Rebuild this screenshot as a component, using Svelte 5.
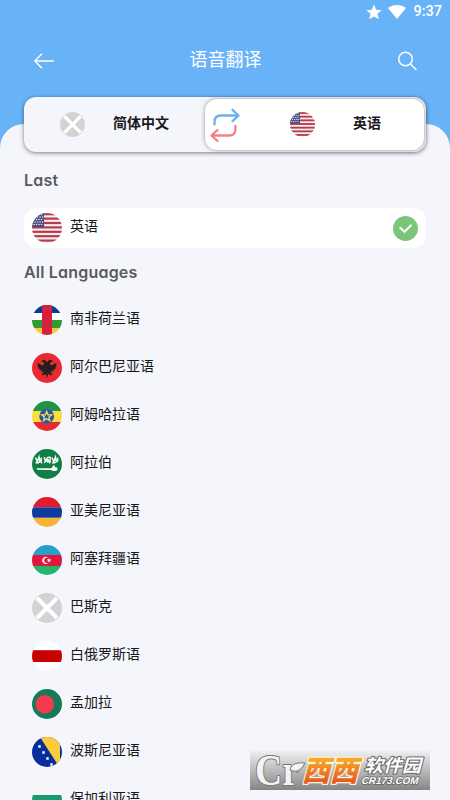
<script>
  const last = { name: '英语', flag: 'us' };

  const languages = [
    { name: '南非荷兰语', flag: 'cf' },
    { name: '阿尔巴尼亚语', flag: 'al' },
    { name: '阿姆哈拉语', flag: 'et' },
    { name: '阿拉伯', flag: 'sa' },
    { name: '亚美尼亚语', flag: 'am' },
    { name: '阿塞拜疆语', flag: 'az' },
    { name: '巴斯克', flag: 'none' },
    { name: '白俄罗斯语', flag: 'by' },
    { name: '孟加拉', flag: 'bd' },
    { name: '波斯尼亚语', flag: 'ba' },
    { name: '保加利亚语', flag: 'bg' }
  ];

  const stripes = [0, 1, 2, 3, 4, 5, 6];
  const starRows = [1.5, 4, 6.5, 9, 11.5];
  const starCols = [2, 4.5, 7, 9.5];
</script>

<!-- every flag is drawn on a 30x30 grid and clipped to a circle -->
{#snippet flag(code)}
  <svg class="flag" viewBox="0 0 30 30">
    {#if code === 'us'}
      <rect width="30" height="30" fill="#f4eef0" />
      {#each stripes as s}
        <rect y={s * 4.4 + 0.1} width="30" height="2.2" fill="#b83a4b" />
      {/each}
      <rect width="12" height="14" fill="#474a7f" />
      {#each starRows as y, r}
        {#each starCols as x}
          <circle cx={x + (r % 2 ? 1.1 : 0)} cy={y} r="0.8" fill="#e8e8f4" />
        {/each}
      {/each}
    {:else if code === 'cf'}
      <rect width="30" height="8" fill="#0d3b91" />
      <rect y="8" width="30" height="7" fill="#fff" />
      <rect y="15" width="30" height="8" fill="#319b31" />
      <rect y="23" width="30" height="7" fill="#fdc63c" />
      <rect x="10" width="10" height="30" fill="#d5213e" />
    {:else if code === 'al'}
      <rect width="30" height="30" fill="#ea2a33" />
      <path
        fill="#231f20"
        d="M15 9.2 12.8 6.8 10 7.3 9.3 8.8 11.4 9 12.2 11 10.8 12.5 5.2 9.8 6.2 12.4 4.8 12.6 6.8 14.4 5.6 15.2 8.2 16.1 7 17.3 10.2 17.3 9 19.2 12 18.4 10.2 21 8.8 21.4 11.8 22.2 13.7 20.7 15 25 16.3 20.7 18.2 22.2 21.2 21.4 19.8 21 18 18.4 21 19.2 19.8 17.3 23 17.3 21.8 16.1 24.4 15.2 23.2 14.4 25.2 12.6 23.8 12.4 24.8 9.8 19.2 12.5 17.8 11 18.6 9 20.7 8.8 20 7.3 17.2 6.8Z"
      />
    {:else if code === 'et'}
      <rect width="30" height="10" fill="#219343" />
      <rect y="10" width="30" height="11" fill="#fbdd3b" />
      <rect y="21" width="30" height="9" fill="#e62b30" />
      <circle cx="14.7" cy="15.3" r="7.4" fill="#2458b0" />
      <path class="outline" stroke="#f5dc4d" stroke-width="1.3" d="m14.7 10.3 1.3 3.5 3.7.1-2.9 2.3 1.1 3.6-3.2-2.1-3.2 2.1 1.1-3.6-2.9-2.3 3.7-.1Z" />
    {:else if code === 'sa'}
      <rect width="30" height="30" fill="#117e43" />
      <path class="outline" stroke="#fff" stroke-width="1.4" d="m3.5 8.5 1.8 4.3L7 8l1.1 5.5M3.500 13.800h2.800l3-2.200-.2-3M7.400 10.500l2.700 3.800M12 8.300l1.300 3.300 2.500-3.200 2.300-.1v5M12 13.800l4-3.300 2 3.800M13 10.300l3.300 3.300M20 8.500l1.800 4.300L23.500 8l1.100 5.500M20 13.800h2.800l3-2.200-.2-3" />
      <path fill="#fff" d="M4.500 19.200h15.200l1-2.200 1.800-.7.5 2 2.200.3.300 2.300-1.700 1.200h-3.400l-.9-1.200-14.200-.2Z" />
    {:else if code === 'am'}
      <rect width="30" height="10.3" fill="#df1b2d" />
      <rect y="10.3" width="30" height="10.5" fill="#0d3ba0" />
      <rect y="20.8" width="30" height="9.2" fill="#f8b334" />
    {:else if code === 'az'}
      <rect width="30" height="10" fill="#28a0cb" />
      <rect y="10" width="30" height="11" fill="#e0163f" />
      <rect y="21" width="30" height="9" fill="#24b76a" />
      <path fill="#fff" d="M16.2 12.9a3.5 3.5 0 1 0 0 5 2.8 2.8 0 1 1 0-5Z" />
      <path fill="#fff" d="m17 13.100.6 1.400 1.300-.2-.8 1.100.8 1.100-1.300-.2-.6 1.400-.6-1.400-1.300.2.8-1.100-.8-1.100 1.300.2Z" />
    {:else if code === 'by'}
      <rect width="30" height="30" fill="#fff" />
      <rect y="9.2" width="30" height="11.8" fill="#c80000" />
    {:else if code === 'bd'}
      <rect width="30" height="30" fill="#147a59" />
      <circle cx="12.8" cy="15.2" r="9.2" fill="#f53a4d" />
    {:else if code === 'ba'}
      <rect width="30" height="30" fill="#092e9c" />
      <path fill="#fdcc3b" d="M8 0h20v28h-2Z" />
      <path fill="#fff" d="M6.300 8.300h2.400v2.400H6.300zM10.300 14.300h2.400v2.400h-2.400zM14.300 20.300h2.400v2.400h-2.400zM18.300 26.300h2.400v2.400h-2.400z" />
    {:else if code === 'bg'}
      <rect width="30" height="10" fill="#f7f7f7" />
      <rect y="10" width="30" height="10" fill="#149d70" />
      <rect y="20" width="30" height="10" fill="#d62612" />
    {:else}
      <rect width="30" height="30" fill="#d3d3d3" />
      <path class="outline" stroke="#fff" stroke-width="4" d="m5 5 20 20M25 5 5 25" />
    {/if}
  </svg>
{/snippet}

<main>
  <header>
    <div class="status">
      <svg width="16" height="16" viewBox="0 0 14 14">
        <path fill="#fff" d="m7 .5 1.900 4.500 4.800.4-3.700 3.200 1.200 4.800L7 10.900l-4.200 2.500L4 8.600.3 5.400l4.800-.4Z" />
      </svg>
      <svg width="18" height="14" viewBox="0 0 18 14">
        <path fill="#fff" d="M9 14 0 3C5.400-1 12.600-1 18 3Z" />
      </svg>
      <span class="clock">9:37</span>
    </div>
    <nav>
      <svg class="line" width="20" height="16" viewBox="0 0 20 16">
        <path d="M19.300 8H.8M7.500 1.200.8 8l6.700 6.800" />
      </svg>
      <h1>语音翻译</h1>
      <svg class="line" width="20" height="20" viewBox="0 0 20 20">
        <circle cx="8.500" cy="8" r="6.800" />
        <path d="m13.500 13 5.500 5.500" />
      </svg>
    </nav>
  </header>

  <section class="sheet">
    <div class="switcher">
      <button class="from">
        {@render flag('none')}
        <span>简体中文</span>
      </button>
      <button class="to">
        <svg class="swap" width="30" height="32" viewBox="0 0 30 32">
          <path stroke="#69b3ee" d="M4.500 15.500V13q0-6.500 6.500-6.500h17.500M22.500.8l6 5.700-6 5.700" />
          <path stroke="#f68080" d="M25.500 17v2.500q0 7-6.500 7H2M7.500 21l-6 5.500 6 5.500" />
        </svg>
        {@render flag('us')}
        <span>英语</span>
      </button>
    </div>

    <h2 class="last-title">Last</h2>
    <div class="row selected">
      {@render flag(last.flag)}
      <span>{last.name}</span>
      <svg class="check" width="25" height="25" viewBox="0 0 25 25">
        <circle cx="12.500" cy="12.500" r="12.500" fill="#7ac57a" />
        <path d="m6.700 11.300 4.800 4.600 7-7.200" />
      </svg>
    </div>

    <h2 class="all-title">All Languages</h2>
    <ul>
      {#each languages as lang (lang.name)}
        <li class="row">
          {@render flag(lang.flag)}
          <span>{lang.name}</span>
        </li>
      {/each}
    </ul>
  </section>

  <aside class="badge">
    <svg width="180" height="40" viewBox="0 0 180 40">
      <defs>
        <linearGradient id="plate" x2="0" y2="1">
          <stop offset="0" stop-color="#f1f2f4" />
          <stop offset="1" stop-color="#858585" />
        </linearGradient>
        <linearGradient id="fire" x2="0" y2="1">
          <stop offset="0.2" stop-color="#f7b52c" />
          <stop offset="0.9" stop-color="#e4501f" />
        </linearGradient>
      </defs>
      <rect width="180" height="40" fill="url(#plate)" />
      <text class="brand-cr" x="5" y="34.500" textLength="44" lengthAdjust="spacingAndGlyphs">Cr</text>
      <path class="leaf" d="M40 20c1-5 5-8 15-7-3 6-7 9-12 8Z" />
      <g transform="skewX(-15)">
        <text class="brand-xi" x="60" y="31" textLength="56" lengthAdjust="spacingAndGlyphs">西西</text>
        <text class="brand-name" x="120" y="22.500" textLength="57" lengthAdjust="spacingAndGlyphs">软件园</text>
        <text class="brand-url" x="120" y="34" textLength="57" lengthAdjust="spacingAndGlyphs">CR173.COM</text>
      </g>
    </svg>
  </aside>
</main>

<style>
  :global(body) {
    margin: 0;
    overflow: hidden;
    background: #68b3f7;
    font-family: Roboto, 'Noto Sans CJK SC', sans-serif;
  }

  main {
    position: relative;
    height: 800px;
    overflow: hidden;
    color: #17191c;
  }

  header {
    height: 124px;
    color: #fff;
  }

  .status {
    display: flex;
    align-items: center;
    gap: 7px;
    height: 24px;
    padding-right: 8px;
    justify-content: flex-end;
  }
  .status svg:first-child {
    margin-right: -1px;
  }
  .clock {
    font-size: 14.5px;
    font-weight: 500;
    line-height: 24px;
  }

  nav {
    display: flex;
    align-items: center;
    justify-content: space-between;
    height: 74px;
    padding: 0 33px 0 34px;
  }
  .line {
    fill: none;
    stroke: #fff;
    stroke-width: 1.5;
    stroke-linecap: round;
    stroke-linejoin: round;
  }

  h1 {
    margin: 0 0 3px;
    font-size: 18px;
    font-weight: 400;
    line-height: 26px;
  }

  .sheet {
    display: flow-root;
    height: 676px;
    padding: 0 24px;
    border-radius: 24px 24px 0 0;
    background: #f4f6fb;
  }

  .switcher {
    display: flex;
    width: 402px;
    height: 55px;
    margin-top: -27px;
    border-radius: 12px;
    background: #f4f6fb;
    box-shadow: 0 1px 4px rgba(0, 0, 0, 0.5);
  }
  .switcher button {
    display: flex;
    align-items: center;
    padding: 0;
    border: 0;
    background: none;
    color: inherit;
    font: bold 14px/20px Roboto, 'Noto Sans CJK SC', sans-serif;
  }
  .switcher .from {
    width: 181px;
    padding-left: 36px;
    gap: 28px;
  }
  .switcher .to {
    width: 219px;
    height: 51px;
    margin-top: 2px;
    border-radius: 12px;
    background: #fff;
    box-shadow: 0 0 4px rgba(0, 0, 0, 0.4);
  }
  .switcher .flag {
    width: 25px;
    height: 25px;
  }
  .swap {
    margin: 0 50px 0 5px;
    overflow: visible;
    fill: none;
    stroke-width: 2.3;
    stroke-linecap: round;
    stroke-linejoin: round;
  }
  .switcher span {
    margin-bottom: 3px;
  }
  .switcher .to span {
    margin-left: 38px;
  }

  .flag {
    flex: none;
    width: 30px;
    height: 30px;
    border-radius: 50%;
  }
  .outline {
    fill: none;
  }

  h2 {
    margin: 0;
    color: #5a5a5c;
    font: 600 16px/24px Inter, sans-serif;
    font-feature-settings: 'cv11';
    letter-spacing: 0.2px;
  }
  .last-title {
    padding: 16px 0;
  }
  .all-title {
    padding: 12px 0;
  }

  .row {
    display: flex;
    align-items: center;
    gap: 8px;
    height: 48px;
    padding: 0 8px;
    font-size: 14px;
    line-height: 20px;
  }
  .row span {
    margin-bottom: 4px;
  }
  .selected {
    height: 40px;
    border-radius: 12px;
    background: #fff;
  }
  .check {
    margin-left: auto;
  }
  .check path {
    fill: none;
    stroke: #fff;
    stroke-width: 2;
  }

  ul {
    margin: 0;
    padding: 0;
    list-style: none;
  }

  .badge {
    position: absolute;
    left: 250px;
    top: 750px;
    height: 40px;
  }
  .badge svg {
    overflow: visible;
  }
  .badge text {
    paint-order: stroke;
    stroke-linejoin: round;
  }
  .brand-cr,
  .leaf {
    fill: #f3f3f3;
    stroke: #777;
    stroke-width: 2;
  }
  .leaf {
    stroke-width: 1;
  }
  .brand-cr {
    font: bold 44px 'Liberation Serif', serif;
  }
  .brand-xi {
    fill: url(#fire);
    stroke: #fff3dc;
    stroke-width: 2.5;
    font: 900 29px 'Noto Sans CJK SC', sans-serif;
  }
  .brand-name {
    fill: #fff;
    stroke: #666;
    stroke-width: 2;
    font: bold 18px 'Noto Sans CJK SC', sans-serif;
  }
  .brand-url {
    fill: #fff;
    stroke: #666;
    stroke-width: 1.5;
    font: bold 10px 'Liberation Sans', sans-serif;
  }
</style>
